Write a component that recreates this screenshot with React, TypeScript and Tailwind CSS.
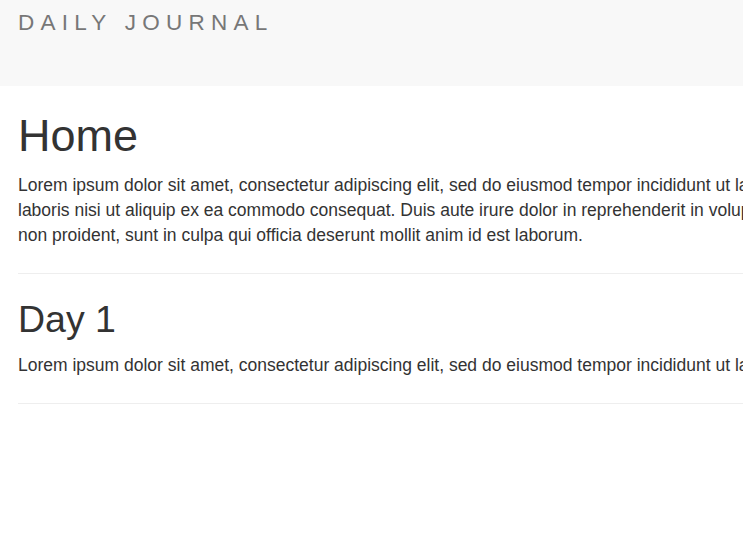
export default function App() {
  const text =
    'Lorem ipsum dolor sit amet, consectetur adipiscing elit, sed do eiusmod tempor incididunt ut labore et dolore magna aliqua. Ut enim ad minim veniam, quis nostrud exercitation ullamco';

  return (
    <div className="w-[743px] h-[543px] overflow-hidden bg-white text-[#333] font-['Liberation_Sans',Arial,sans-serif]">
      <nav className="h-[86px] bg-[#f8f8f8] pl-[18px] pt-[10px]">
        <span className="block text-[22.5px] leading-[25px] tracking-[6.25px] text-[#777] whitespace-nowrap">
          DAILY JOURNAL
        </span>
      </nav>

      <div className="w-[1400px] px-[18px]">
        <h1 className="mt-[25px] mb-[12.5px] text-[45px] leading-[1.1] font-normal">Home</h1>
        <p className="mb-[12.5px] text-[17.5px] leading-[25px] whitespace-nowrap">
          {text}
          <br />
          laboris nisi ut aliquip ex ea commodo consequat. Duis aute irure dolor in reprehenderit in voluptate velit esse cillum dolore eu fugiat nulla pariatur. Excepteur sint occaecat cupidatat
          <br />
          non proident, sunt in culpa qui officia deserunt mollit anim id est laborum.
        </p>
        <hr className="mt-[25px] mb-[25px] border-0 border-t border-[#eee]" />

        <h2 className="mt-[25px] mb-[12.5px] text-[37.5px] leading-[1.1] font-normal">Day 1</h2>
        <p className="mb-[12.5px] text-[17.5px] leading-[25px] whitespace-nowrap">
          Lorem ipsum dolor sit amet, consectetur adipiscing elit, sed do eiusmod tempor incididunt ut labore et dolore magna aliqua.
        </p>
        <hr className="mt-[25px] mb-[25px] border-0 border-t border-[#eee]" />
      </div>
    </div>
  );
}
